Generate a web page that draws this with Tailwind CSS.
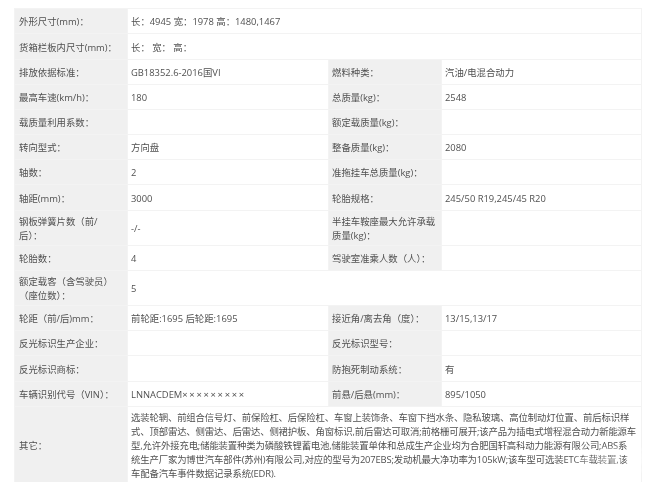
<!DOCTYPE html>
<html lang="zh-CN">
<head>
    <meta charset="UTF-8">
    <meta name="viewport" content="width=device-width, initial-scale=1.0">
    <title>车辆参数</title>
    <script src="https://cdn.jsdelivr.net/npm/@tailwindcss/browser@4"></script>
</head>
<body class="bg-white font-['Open_Sans','Noto_Sans_CJK_SC',sans-serif] text-[9.4px] leading-[14px] text-[#505050]">
    <div class="relative w-[660px] h-[482px] overflow-hidden">
        <div class="pl-[14px] pt-[8px] blur-[0.35px]">
            <table class="table-fixed w-[627px] border-collapse border border-[#f3f3f3]">
                <colgroup>
                    <col class="w-[113px]">
                    <col class="w-[201px]">
                    <col class="w-[113px]">
                    <col class="w-[200px]">
                </colgroup>
                <tbody class="[&_td]:border [&_td]:border-[#f3f3f3] [&_td]:pl-[3px] [&_td]:pr-[3px] [&_td]:pt-[2px] [&_td]:pb-0 [&_td:nth-child(odd)]:bg-[#f0f0f0] [&_td:first-child]:pl-[4px]">
                    <tr class="h-[25px]">
                        <td>外形尺寸(mm)：</td>
                        <td colspan="3" class="bg-white">长：4945 宽：1978 高：1480,1467</td>
                    </tr>
                    <tr class="h-[26px]">
                        <td>货箱栏板内尺寸(mm)：</td>
                        <td colspan="3">长： 宽： 高：</td>
                    </tr>
                    <tr class="h-[25px]">
                        <td>排放依据标准：</td>
                        <td>GB18352.6-2016国VI</td>
                        <td>燃料种类：</td>
                        <td>汽油/电混合动力</td>
                    </tr>
                    <tr class="h-[25px]">
                        <td>最高车速(km/h)：</td>
                        <td>180</td>
                        <td>总质量(kg)：</td>
                        <td>2548</td>
                    </tr>
                    <tr class="h-[25px]">
                        <td>载质量利用系数：</td>
                        <td></td>
                        <td>额定载质量(kg)：</td>
                        <td></td>
                    </tr>
                    <tr class="h-[25px]">
                        <td>转向型式：</td>
                        <td>方向盘</td>
                        <td>整备质量(kg)：</td>
                        <td>2080</td>
                    </tr>
                    <tr class="h-[25px]">
                        <td>轴数：</td>
                        <td>2</td>
                        <td>准拖挂车总质量(kg)：</td>
                        <td></td>
                    </tr>
                    <tr class="h-[26px]">
                        <td>轴距(mm)：</td>
                        <td>3000</td>
                        <td>轮胎规格：</td>
                        <td>245/50 R19,245/45 R20</td>
                    </tr>
                    <tr class="h-[35px]">
                        <td>钢板弹簧片数（前/<br>后）：</td>
                        <td>-/-</td>
                        <td>半挂车鞍座最大允许承载质量(kg)：</td>
                        <td></td>
                    </tr>
                    <tr class="h-[25px]">
                        <td>轮胎数：</td>
                        <td>4</td>
                        <td>驾驶室准乘人数（人）：</td>
                        <td></td>
                    </tr>
                    <tr class="h-[35px]">
                        <td>额定载客（含驾驶员）（座位数）：</td>
                        <td colspan="3">5</td>
                    </tr>
                    <tr class="h-[25px]">
                        <td>轮距（前/后)mm：</td>
                        <td>前轮距:1695 后轮距:1695</td>
                        <td>接近角/离去角（度）：</td>
                        <td>13/15,13/17</td>
                    </tr>
                    <tr class="h-[25px]">
                        <td>反光标识生产企业：</td>
                        <td></td>
                        <td>反光标识型号：</td>
                        <td></td>
                    </tr>
                    <tr class="h-[26px]">
                        <td>反光标识商标：</td>
                        <td></td>
                        <td>防抱死制动系统：</td>
                        <td>有</td>
                    </tr>
                    <tr class="h-[25px]">
                        <td>车辆识别代号（VIN）：</td>
                        <td>LNNACDEM<span class="tracking-[1.7px]">×××××××××</span></td>
                        <td>前悬/后悬(mm)：</td>
                        <td>895/1050</td>
                    </tr>
                    <tr class="h-[76px]">
                        <td>其它：</td>
                        <td colspan="3" class="bg-white whitespace-nowrap tracking-[-0.15px]">
                            选装轮辋、前组合信号灯、前保险杠、后保险杠、车窗上装饰条、车窗下挡水条、隐私玻璃、高位制动灯位置、前后标识样<br>
                            式、顶部雷达、侧雷达、后雷达、侧裙护板、角窗标识,前后雷达可取消;前格栅可展开;该产品为插电式增程混合动力新能源车<br>
                            型,允许外接充电;储能装置种类为磷酸铁锂蓄电池,储能装置单体和总成生产企业均为合肥国轩高科动力能源有限公司;ABS系<br>
                            统生产厂家为博世汽车部件(苏州)有限公司,对应的型号为207EBS;发动机最大净功率为105kW;该车型可选装ETC车载装置,该<br>
                            车配备汽车事件数据记录系统(EDR).
                        </td>
                    </tr>
                </tbody>
            </table>
        </div>
        <!-- 水印 -->
        <div class="absolute right-[10px] bottom-[8px] text-[26px] leading-[30px] font-bold text-white/45 blur-[0.8px]">车质网</div>
    </div>
</body>
</html>
